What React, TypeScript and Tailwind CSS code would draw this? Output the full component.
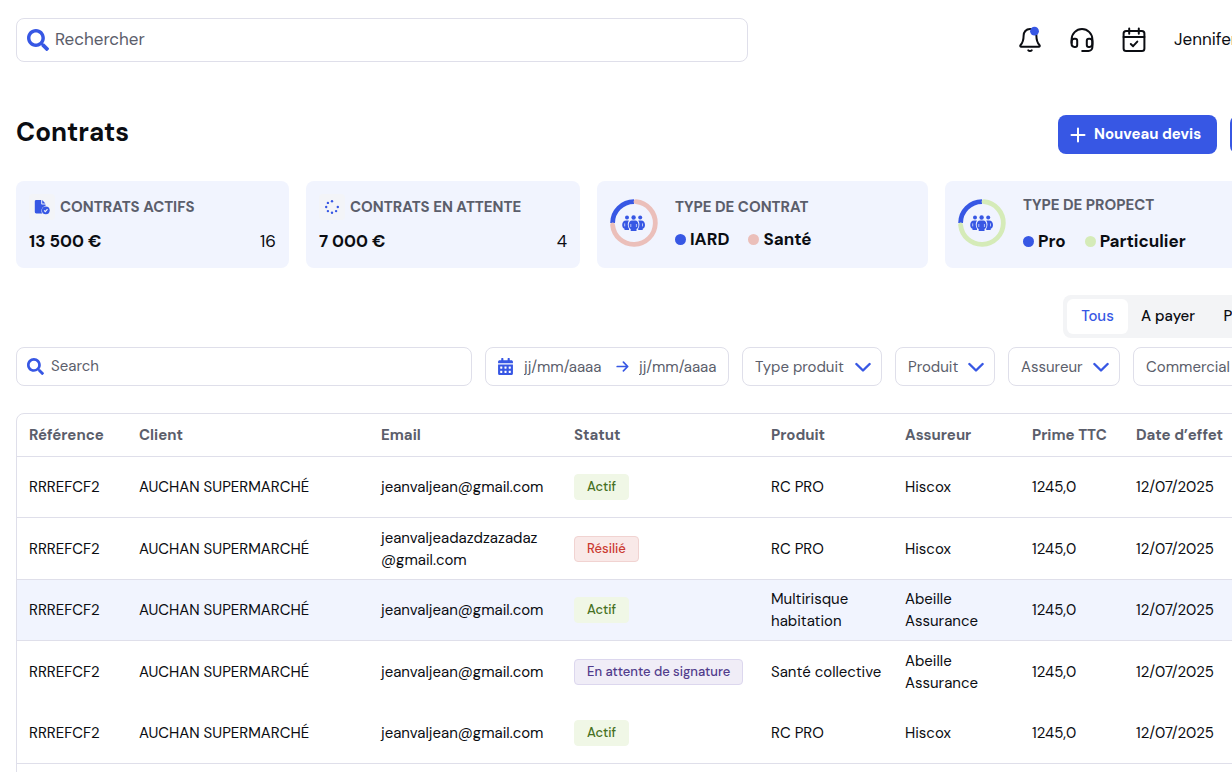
import React from "react";
import { FaCalendarAlt, FaSearch } from "react-icons/fa";

type Status = "Actif" | "Résilié" | "En attente de signature";

type Contract = {
  email: string;
  status: Status;
  product: string;
  insurer: string;
  selected?: boolean;
  noLine?: boolean;
};

const contracts: Contract[] = [
  { email: "jeanvaljean@gmail.com", status: "Actif", product: "RC PRO", insurer: "Hiscox" },
  { email: "jeanvaljeadazdzazadaz @gmail.com", status: "Résilié", product: "RC PRO", insurer: "Hiscox" },
  { email: "jeanvaljean@gmail.com", status: "Actif", product: "Multirisque habitation", insurer: "Abeille Assurance", selected: true },
  { email: "jeanvaljean@gmail.com", status: "En attente de signature", product: "Santé collective", insurer: "Abeille Assurance", noLine: true },
  { email: "jeanvaljean@gmail.com", status: "Actif", product: "RC PRO", insurer: "Hiscox" },
  { email: "jeanvaljean@gmail.com", status: "Actif", product: "RC PRO", insurer: "Hiscox" },
];

const badgeStyles: Record<Status, string> = {
  Actif: "bg-[#f0f7e6] border-[#f0f7e6] text-[#467022]",
  Résilié: "bg-[#f9e9e8] border-[#f1d3d1] text-[#cb3a31]",
  "En attente de signature": "bg-[#f0edf7] border-[#dcd7ee] text-[#513c8c]",
};

function BellIcon() {
  return (
    <svg width="24" height="28" viewBox="0 0 24 28" fill="none" stroke="#0b0d12" strokeWidth="2" strokeLinecap="round" strokeLinejoin="round">
      <path d="M12 3c-4 0-6.400 3-6.400 6.800 0 5.200-1.500 7.600-3 9.200-.8.900-.4 1.800.7 1.800h17.400c1.100 0 1.500-.9.700-1.800-1.500-1.600-3-4-3-9.200C18.400 6 16 3 12 3Z" />
      <path d="M10.300 24.300c.9 1 2.500 1 3.400 0" />
      <circle cx="16.500" cy="5.200" r="4.400" fill="#3757e4" stroke="none" />
    </svg>
  );
}

function HeadsetIcon() {
  return (
    <svg width="24" height="26" viewBox="0 0 24 26" fill="none" stroke="#0b0d12" strokeWidth="2" strokeLinecap="round" strokeLinejoin="round">
      <path d="M1.600 16v-3.500a10.400 10.400 0 0 1 20.800 0V20a4 4 0 0 1-4 4h-6.200" />
      <path d="M1.600 14.500a2.800 2.800 0 0 1 2.800-2.800h.8a2 2 0 0 1 2 2v4.200a2 2 0 0 1-2 2h-.8a2.800 2.800 0 0 1-2.800-2.800Z" />
      <path d="M22.400 14.500a2.800 2.800 0 0 0-2.800-2.800h-.8a2 2 0 0 0-2 2v4.200a2 2 0 0 0 2 2h.8a2.800 2.800 0 0 0 2.800-2.800Z" />
    </svg>
  );
}

function CalendarCheckIcon() {
  return (
    <svg width="24" height="26" viewBox="0 0 24 26" fill="none" stroke="#0b0d12" strokeWidth="2" strokeLinecap="round" strokeLinejoin="round">
      <rect x="1.600" y="4" width="20.800" height="20" rx="2.500" />
      <path d="M1.600 10h20.800M7.200 1.500v5.200M16.800 1.500v5.200M8.800 17l2.300 2.200 4.200-4.600" />
    </svg>
  );
}

function PlusIcon() {
  return (
    <svg width="16" height="16" viewBox="0 0 16 16" fill="none" stroke="currentColor" strokeWidth="2" strokeLinecap="round" className="shrink-0">
      <path d="M8 1.500v13M1.500 8h13" />
    </svg>
  );
}

function ChevronIcon() {
  return (
    <svg width="16" height="16" viewBox="0 0 16 16" fill="none" stroke="#3757e4" strokeWidth="2.400" strokeLinecap="round" strokeLinejoin="round" className="pointer-events-none absolute top-3 right-[11px]">
      <path d="M1.400 5 8 11.500 14.600 5" />
    </svg>
  );
}

function ArrowIcon() {
  return (
    <svg width="13" height="13" viewBox="0 0 13 13" fill="none" stroke="#3757e4" strokeWidth="1.700" strokeLinecap="round" strokeLinejoin="round" className="mr-[10px] ml-2 shrink-0">
      <path d="M1.200 6.500h10.400M7.400 2.200l4.300 4.300-4.300 4.300" />
    </svg>
  );
}

function FileCheckIcon() {
  return (
    <svg width="16" height="16" viewBox="0 0 16 16" fill="#3757e4">
      <path d="M2.200 1h5v3.600c0 .6.500 1 1 1h3.300v1.500a4.700 4.700 0 0 0-3.200 7.400H2.200A1.400 1.400 0 0 1 .8 13.100V2.400C.8 1.600 1.400 1 2.200 1Z" />
      <path d="M8.200 1.100 11.400 4.600H8.200Z" />
      <circle cx="11.800" cy="11.300" r="3.900" />
      <path d="m10.100 11.400 1.200 1.200 2.200-2.400" fill="none" stroke="#f4f5f8" strokeWidth="1.100" />
    </svg>
  );
}

function PendingIcon() {
  return (
    <svg width="16" height="16" viewBox="0 0 16 16" fill="#3757e4">
      <circle cx="8" cy="2.200" r="1.200" />
      <circle cx="3.900" cy="3.900" r="1.200" />
      <circle cx="2.200" cy="8" r="1.200" />
      <circle cx="3.900" cy="12.100" r="1.200" />
      <circle cx="8" cy="13.800" r="1.200" />
      <circle cx="12.100" cy="12.100" r="1.200" />
      <circle cx="13.800" cy="8" r="1.200" />
    </svg>
  );
}

function Donut({ color }: { color: string }) {
  return (
    <svg width="48" height="48" viewBox="0 0 48 48" fill="none" strokeWidth="4.800" className="shrink-0">
      <path d="M2.600 24A21.400 21.400 0 0 1 24 2.600" stroke="#3757e4" />
      <path d="M26 2.700A21.400 21.400 0 1 1 2.600 26" stroke={color} strokeLinecap="round" />
      <g fill="#3757e4">
        <circle cx="17" cy="18.600" r="2" />
        <circle cx="30.200" cy="18.600" r="2" />
        <circle cx="23.600" cy="18.500" r="2.200" />
        <path d="M18.900 21.600h-2.700c-2.700 0-4 2.100-4 4.400 0 1.900.9 3.300 2.300 3.800v1.300h4.500v-1.400c-1.600-2.300-1.700-5.700-.1-8.100Z" />
        <path d="M28.300 21.600H31c2.700 0 4 2.100 4 4.400 0 1.900-.9 3.300-2.300 3.800v1.300h-4.500v-1.400c1.600-2.300 1.700-5.700.1-8.100Z" />
        <path d="M22 21.600h3.200c2 0 3.300 2 3.300 4.500 0 2.100-.8 3.400-2 4v1.800h-5.800v-1.800c-1.200-.6-2-1.900-2-4 0-2.500 1.300-4.500 3.300-4.500Z" />
      </g>
      <path d="M14.700 24.400v3M32.500 24.400v3M20.800 25v3M26.400 25v3" stroke="#f1f4fe" strokeWidth=".7" />
    </svg>
  );
}

function StatCard({ icon, title, amount, count }: { icon: React.ReactNode; title: string; amount: string; count: number }) {
  return (
    <div className="flex flex-col gap-2 rounded-lg bg-[#f1f4fe] p-[13px]">
      <div className="flex items-center gap-[5px]">
        <span className="flex size-[26px] items-center justify-center rounded bg-[#f3f4f8]">{icon}</span>
        <h2 className="text-[15px] font-bold text-[#5b5e6b]">{title}</h2>
      </div>
      <div className="flex justify-between text-[17px] leading-[27px] text-[#0b0d12]">
        <p className="font-bold">{amount}</p>
        <p>{count}</p>
      </div>
    </div>
  );
}

function Legend({ dot, label }: { dot: string; label: string }) {
  return (
    <li className="flex items-center gap-1">
      <span className={`size-[11px] rounded-full ${dot}`} />
      {label}
    </li>
  );
}

function FilterSelect({ label, width }: { label: string; width: string }) {
  return (
    <div className={`relative shrink-0 ${width}`}>
      <select aria-label={label} className="h-[39px] w-full appearance-none rounded-lg border border-[#dfdfea] bg-white pt-px pl-3 text-[15px] text-[#5b5e6b]">
        <option>{label}</option>
      </select>
      <ChevronIcon />
    </div>
  );
}

export default function App() {
  return (
    <div className="min-h-screen overflow-x-hidden bg-white font-['DM_Sans',Inter,sans-serif] text-[#0b0d12]">
      <div className="min-w-[1292px] px-4 pt-[18px]">
        <header className="flex items-center justify-between">
          <label className="flex h-11 w-[732px] items-center gap-[6px] rounded-lg border border-[#dfdfea] px-[10px]">
            <FaSearch className="size-[22px] text-[#3757e4]" />
            <input type="search" aria-label="Rechercher" placeholder="Rechercher" className="flex-1 text-[17px] outline-none placeholder:text-[#5b5e6b]" />
          </label>
          <div className="flex items-center gap-7">
            <button aria-label="Notifications"><BellIcon /></button>
            <button aria-label="Assistance"><HeadsetIcon /></button>
            <button aria-label="Agenda"><CalendarCheckIcon /></button>
            <button className="w-[102px] text-left text-[17px]">Jennifer</button>
          </div>
        </header>

        <main>
          <div className="mt-[53px] flex items-center justify-between">
            <h1 className="pb-[6px] text-[26px] leading-8 font-bold">Contrats</h1>
            <div className="flex gap-[13px]">
              <button className="flex h-[39px] w-[159px] items-center gap-2 rounded-lg bg-[#3757e4] px-3 text-[15px] font-bold whitespace-nowrap text-white">
                <PlusIcon />
                Nouveau devis
              </button>
              <button aria-label="Ajouter" className="flex h-[39px] w-[46px] items-center justify-center rounded-lg bg-[#3757e4] text-white">
                <PlusIcon />
              </button>
            </div>
          </div>

          <section className="mt-[27px] grid grid-cols-[273fr_274fr_331fr_331fr] gap-[17px]">
            <StatCard icon={<FileCheckIcon />} title="CONTRATS ACTIFS" amount="13 500 €" count={16} />
            <StatCard icon={<PendingIcon />} title="CONTRATS EN ATTENTE" amount="7 000 €" count={4} />
            <div className="flex items-center gap-[17px] rounded-lg bg-[#f1f4fe] px-[13px] pb-[3px]">
              <Donut color="#ebbfba" />
              <div className="flex flex-col gap-2">
                <h2 className="text-[15px] leading-6 font-bold text-[#5b5e6b]">TYPE DE CONTRAT</h2>
                <ul className="flex gap-[19px] text-[17px] leading-6 font-bold">
                  <Legend dot="bg-[#3757e4]" label="IARD" />
                  <Legend dot="bg-[#ebbfba]" label="Santé" />
                </ul>
              </div>
            </div>
            <div className="flex items-center gap-[17px] rounded-lg bg-[#f1f4fe] px-[13px] pb-[3px]">
              <Donut color="#d5ebb8" />
              <div className="flex flex-col gap-3">
                <h2 className="text-[15px] leading-6 font-bold text-[#5b5e6b]">TYPE DE PROPECT</h2>
                <ul className="flex gap-[19px] text-[17px] leading-6 font-bold">
                  <Legend dot="bg-[#3757e4]" label="Pro" />
                  <Legend dot="bg-[#d5ebb8]" label="Particulier" />
                </ul>
              </div>
            </div>
          </section>

          <div className="mt-[27px] flex justify-end">
            <div className="flex rounded-lg bg-[#f3f4f6] p-1 text-[15px] font-medium">
              <button className="h-[35px] w-[61px] rounded-md bg-white text-[#3757e4]">Tous</button>
              <button className="h-[35px] w-[80px]">A payer</button>
              <button className="h-[35px] w-[64px]">Payé</button>
            </div>
          </div>

          <div className="mt-[9px] flex gap-[13px]">
            <label className="flex h-[39px] flex-1 items-center gap-[7px] rounded-lg border border-[#dfdfea] px-[10px]">
              <FaSearch className="size-[17px] text-[#3757e4]" />
              <input type="search" aria-label="Search" placeholder="Search" className="flex-1 text-[15px] outline-none placeholder:text-[#5b5e6b]" />
            </label>
            <div className="flex h-[39px] w-[244px] items-center rounded-lg border border-[#dfdfea] pl-[11px] text-[15px]">
              <FaCalendarAlt className="mr-[10px] size-[17px] shrink-0 text-[#3757e4]" />
              <input aria-label="Date de début" placeholder="jj/mm/aaaa" className="w-[84px] pt-px outline-none placeholder:text-[#5b5e6b]" />
              <ArrowIcon />
              <input aria-label="Date de fin" placeholder="jj/mm/aaaa" className="w-[84px] pt-px outline-none placeholder:text-[#5b5e6b]" />
            </div>
            <FilterSelect label="Type produit" width="w-[140px]" />
            <FilterSelect label="Produit" width="w-[100px]" />
            <FilterSelect label="Assureur" width="w-[112px]" />
            <FilterSelect label="Commercial" width="w-[143px]" />
          </div>

          <div className="mt-[27px] overflow-hidden rounded-lg border border-[#dfdfea]">
            <table className="w-full table-fixed border-collapse text-left text-[15px] leading-[22px]">
              <thead>
                <tr className="h-[42px] border-b border-[#dfdfea] text-[#5b5e6b] *:px-3 *:font-bold *:whitespace-nowrap">
                  <th className="w-[110px]">Référence</th>
                  <th className="w-[242px]">Client</th>
                  <th className="w-[193px]">Email</th>
                  <th className="w-[197px]">Statut</th>
                  <th className="w-[134px]">Produit</th>
                  <th className="w-[127px]">Assureur</th>
                  <th className="w-[104px]">Prime TTC</th>
                  <th>Date d’effet</th>
                </tr>
              </thead>
              <tbody>
                {contracts.map((c, i) => (
                  <tr
                    key={i}
                    className={`h-[61px] even:h-[62px] *:pt-px *:pl-3 ${c.noLine ? "" : "border-b border-[#dfdfea]"} ${c.selected ? "bg-[#f1f4fe]" : ""}`}
                  >
                    <td>RRREFCF2</td>
                    <td>AUCHAN SUPERMARCHÉ</td>
                    <td>{c.email}</td>
                    <td>
                      <span className={`inline-flex h-[26px] items-center rounded border px-3 text-[13px] font-medium whitespace-nowrap ${badgeStyles[c.status]}`}>
                        {c.status}
                      </span>
                    </td>
                    <td>{c.product}</td>
                    <td>{c.insurer}</td>
                    <td>1245,0</td>
                    <td>12/07/2025</td>
                  </tr>
                ))}
              </tbody>
            </table>
          </div>
        </main>
      </div>
    </div>
  );
}
